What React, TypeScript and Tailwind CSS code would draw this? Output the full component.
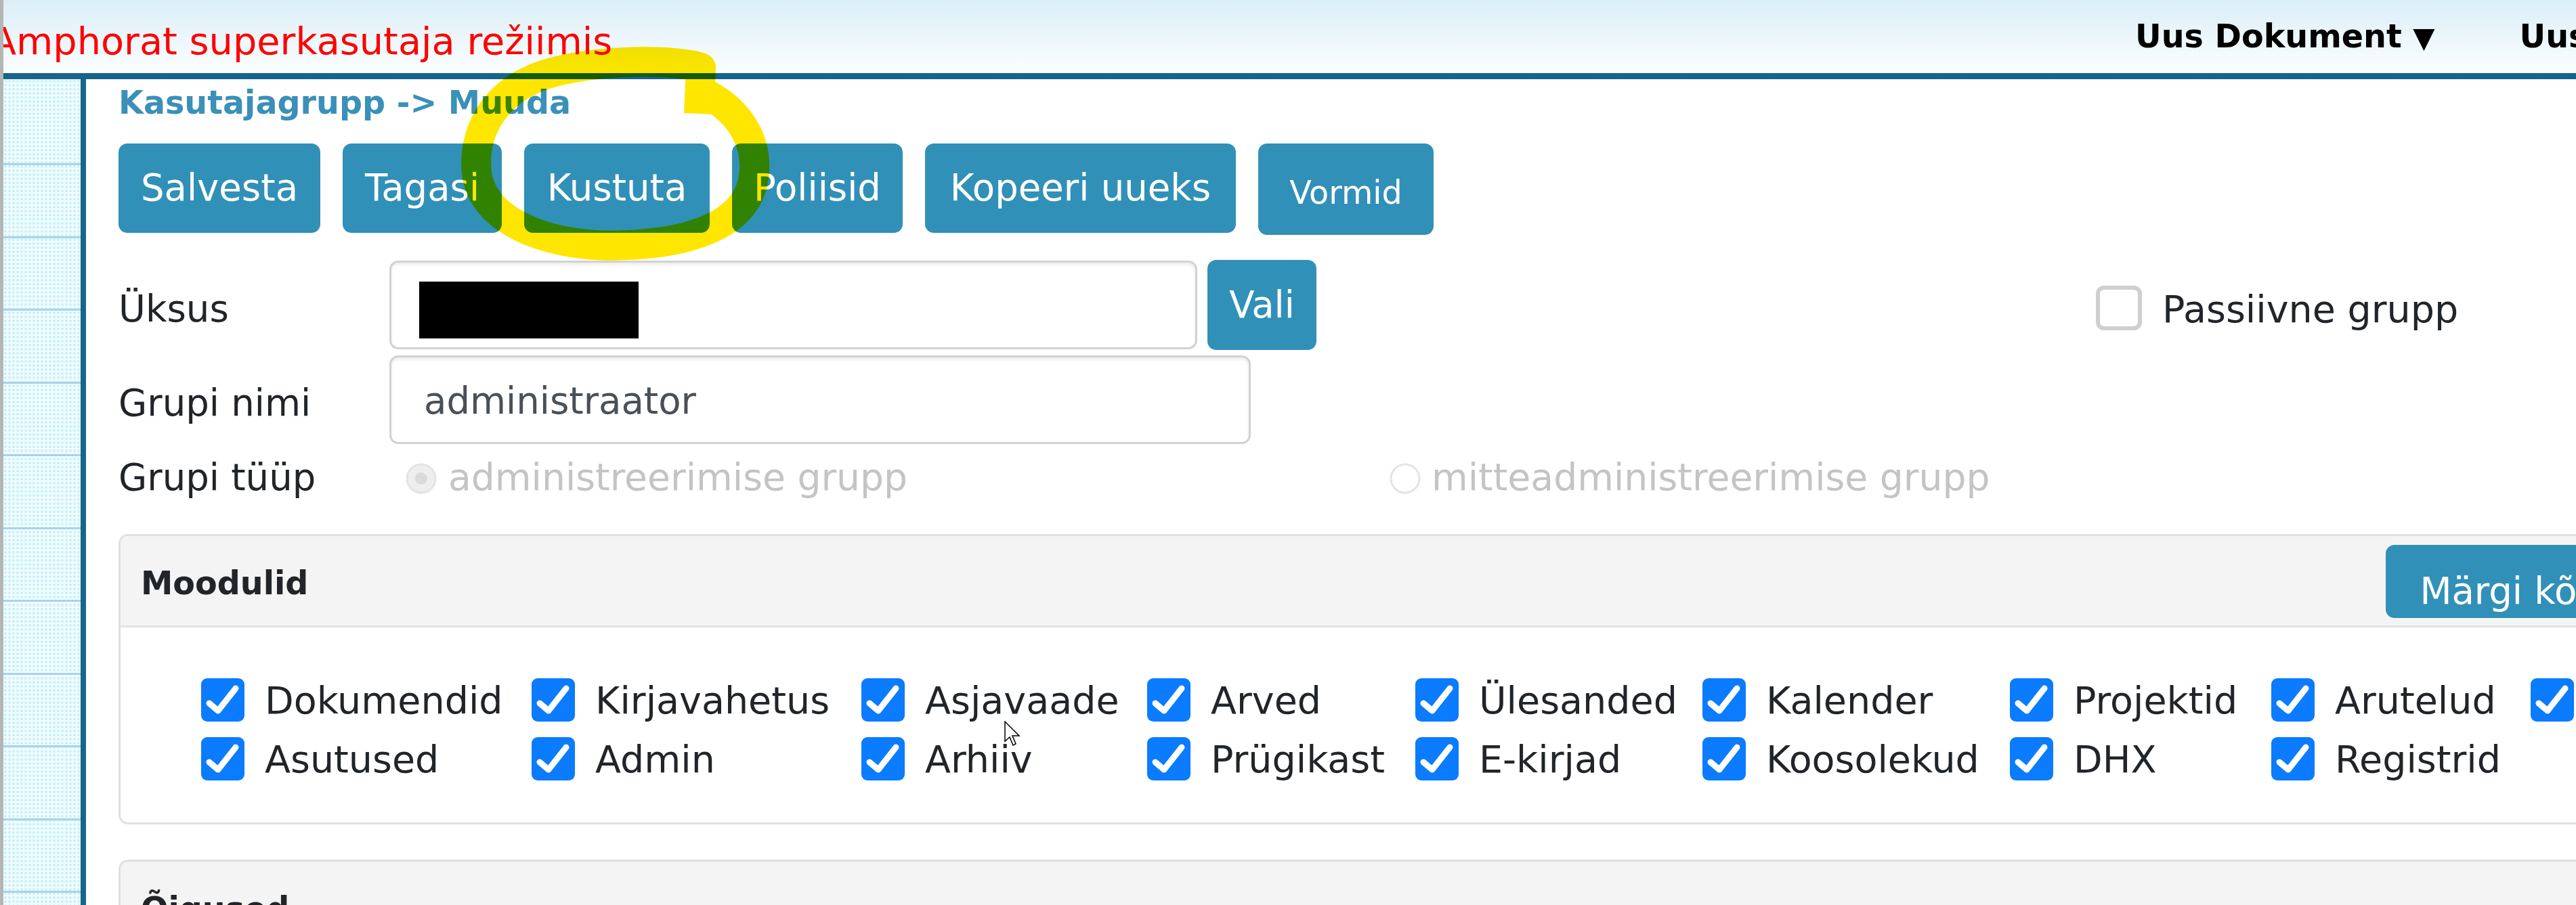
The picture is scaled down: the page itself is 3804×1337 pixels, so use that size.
const row1 = ["Dokumendid", "Kirjavahetus", "Asjavaade", "Arved", "Ülesanded", "Kalender", "Projektid", "Arutelud", "Töölaud"];
const row2 = ["Asutused", "Admin", "Arhiiv", "Prügikast", "E-kirjad", "Koosolekud", "DHX", "Registrid"];

const buttons = [
    { label: "Salvesta", w: "w-[298px]" },
    { label: "Tagasi", w: "w-[235px]" },
    { label: "Kustuta", w: "w-[274px]" },
    { label: "Poliisid", w: "w-[252px]" },
    { label: "Kopeeri uueks", w: "w-[459px]" },
];

function Check() {
    return (
        <span className="flex h-[64px] w-[64px] shrink-0 items-center justify-center rounded-[9px] bg-[#0b7bff]">
            <svg viewBox="0 0 64 64" className="h-[64px] w-[64px]">
                <path d="M12 37 L25 48 L51 15" fill="none" stroke="#fff" strokeWidth="9" strokeLinecap="round" strokeLinejoin="round" />
            </svg>
        </span>
    );
}

function Radio({ checked }: { checked?: boolean }) {
    return (
        <svg viewBox="0 0 46 46" className="h-[46px] w-[46px] shrink-0">
            <circle cx="23" cy="23" r="21" fill={checked ? "#eeeeee" : "#fff"} stroke="#e4e4e4" strokeWidth="3" />
            {checked && <circle cx="23" cy="23" r="9" fill="#dadada" />}
        </svg>
    );
}

export default function App() {
    const modules = [...row1, ...row2];
    return (
        <div className="relative flex h-[1337px] w-[3804px] flex-col overflow-hidden border-l-[5px] border-[#b5b5b5] bg-white font-['DejaVu_Sans',sans-serif] text-[#212529]">
            {/* top bar */}
            <div className="flex h-[117px] shrink-0 items-start overflow-hidden border-b-[9px] border-[#17658a] bg-linear-to-b from-[#dbeef7] to-[#fcfeff]">
                <div className="-ml-[19px] w-[3167px] shrink-0 pt-[33px] text-[55.7px] leading-none whitespace-nowrap text-[#ff0000]">
                    Amphorat superkasutaja režiimis
                </div>
                <div className="flex shrink-0 gap-[125px] pt-[30px] text-[47.6px] leading-none font-bold whitespace-nowrap text-black">
                    <span>Uus Dokument <span className="text-[42px]">▼</span></span>
                    <span>Uus Ülesanne <span className="text-[42px]">▼</span></span>
                </div>
            </div>

            <div className="flex flex-1">
                {/* side column */}
                <div className="flex w-[122px] shrink-0 flex-col border-r-[8px] border-[#17658a] bg-[#f3fcfe] bg-[radial-gradient(circle,#c6f2fa_1.6px,transparent_2.2px)] bg-[length:6px_6px]">
                    <div className="h-[127px] shrink-0 border-b-[3px] border-[#a9d3e8]" />
                    {Array.from({ length: 10 }).map((_, i) => (
                        <div key={i} className="h-[107.5px] shrink-0 border-b-[3px] border-[#a9d3e8]" />
                    ))}
                </div>

                {/* main */}
                <div className="flex flex-col pl-[48px]">
                    <div className="mt-[11px] text-[47.6px] leading-none font-bold whitespace-nowrap text-[#3a90b8]">
                        Kasutajagrupp -&gt; Muuda
                    </div>

                    <div className="mt-[36px] flex items-start gap-[33px]">
                        {buttons.map((b) => (
                            <div key={b.label} className={`flex h-[132px] ${b.w} shrink-0 items-center justify-center rounded-[13px] bg-[#3190b7] text-[54.5px] leading-none whitespace-nowrap text-white`}>
                                {b.label}
                            </div>
                        ))}
                        <div className="flex h-[135px] w-[259px] shrink-0 items-center justify-center rounded-[13px] bg-[#3190b7] pt-[12px] text-[47.6px] leading-none text-white">
                            Vormid
                        </div>
                    </div>

                    {/* Üksus */}
                    <div className="mt-[37px] flex items-start">
                        <div className="w-[400px] shrink-0 pt-[45px] text-[54.5px] leading-none">Üksus</div>
                        <div className="mt-[1px] h-[131px] w-[1193px] shrink-0 rounded-[13px] border-[3px] border-[#d2d2d2] pt-[28px] pl-[41px] shadow-[inset_0_3px_4px_rgba(0,0,0,0.08)]">
                            <div className="h-[84px] w-[324px] bg-black" />
                        </div>
                        <div className="ml-[15px] flex h-[133px] w-[161px] shrink-0 items-center justify-center rounded-[13px] bg-[#3190b7] text-[54.5px] leading-none text-white">
                            Vali
                        </div>
                        <div className="ml-[1151px] flex shrink-0 items-start">
                            <span className="mt-[38px] h-[66px] w-[68px] rounded-[12px] border-[6px] border-[#cfcfcf] bg-white" />
                            <span className="ml-[30px] pt-[45px] text-[55.5px] leading-none whitespace-nowrap">Passiivne grupp</span>
                        </div>
                    </div>

                    {/* Grupi nimi */}
                    <div className="mt-[8px] flex items-start">
                        <div className="w-[400px] shrink-0 pt-[43px] text-[54.5px] leading-none">Grupi nimi</div>
                        <div className="flex h-[131px] w-[1272px] shrink-0 items-center rounded-[13px] border-[3px] border-[#d2d2d2] pl-[48px] pt-[4px] text-[54.5px] leading-none text-[#495057] shadow-[inset_0_3px_4px_rgba(0,0,0,0.08)]">
                            administraator
                        </div>
                    </div>

                    {/* Grupi tüüp */}
                    <div className="mt-[22px] flex items-start">
                        <div className="w-[424px] shrink-0 text-[54.5px] leading-none">Grupi tüüp</div>
                        <div className="flex w-[1453px] shrink-0 items-start">
                            <span className="mt-[6px]"><Radio checked /></span>
                            <span className="ml-[17px] text-[55.2px] leading-none whitespace-nowrap text-[#c4c4c4]">administreerimise grupp</span>
                        </div>
                        <div className="flex shrink-0 items-start">
                            <span className="mt-[6px]"><Radio /></span>
                            <span className="ml-[16px] text-[55.2px] leading-none whitespace-nowrap text-[#c4c4c4]">mitteadministreerimise grupp</span>
                        </div>
                    </div>

                    {/* Moodulid */}
                    <div className="mt-[56px] w-[3760px] shrink-0 rounded-[14px] border-[3px] border-[#e0e0e0]">
                        <div className="flex h-[135px] items-start justify-between rounded-t-[12px] border-b-[3px] border-[#e2e2e2] bg-[#f4f4f4] px-[30px]">
                            <div className="pt-[46px] text-[47.6px] leading-none font-bold">Moodulid</div>
                            <div className="mt-[13px] h-[108px] rounded-[13px] bg-[#3190b7] px-[50px] pt-[41px] text-[54.5px] leading-none whitespace-nowrap text-white">
                                Märgi kõik
                            </div>
                        </div>
                        <div className="pt-[64px] pb-[50px] pl-[119px]">
                            <div className="grid grid-cols-[488px_487px_422px_396px_424px_454px_386px_383px_300px]">
                                {modules.map((m) => (
                                    <div key={m} className="flex h-[87px] items-center">
                                        <Check />
                                        <span className="ml-[30px] text-[55.5px] leading-none whitespace-nowrap">{m}</span>
                                    </div>
                                ))}
                            </div>
                        </div>
                    </div>

                    {/* Õigused */}
                    <div className="mt-[52px] h-[300px] w-[3760px] shrink-0 rounded-[14px] border-[3px] border-[#e0e0e0] bg-[#f4f4f4] px-[30px] pt-[46px] text-[47.6px] leading-none font-bold">
                        Õigused
                    </div>
                </div>
            </div>

            {/* yellow marker annotation */}
            <svg className="pointer-events-none absolute top-0 left-0 h-[1337px] w-[3804px] mix-blend-multiply" viewBox="0 0 3804 1337">
                <path
                    d="M1027 168 L1030 100 C995 88 880 86 800 110 C722 136 690 200 700 262 C714 334 820 368 920 362 C1020 358 1098 330 1108 262 C1116 205 1082 162 1040 140"
                    fill="none"
                    stroke="#ffe600"
                    strokeWidth="44"
                    strokeLinejoin="round"
                />
            </svg>

            {/* mouse cursor */}
            <svg className="pointer-events-none absolute top-[1065px] left-[1478px] h-[38px] w-[26px]" viewBox="0 0 26 38">
                <path d="M1 1 L1 30 L8 24 L13 36 L17 34 L12 22 L22 22 Z" fill="#fff" stroke="#000" strokeWidth="1.5" />
            </svg>
        </div>
    );
}
